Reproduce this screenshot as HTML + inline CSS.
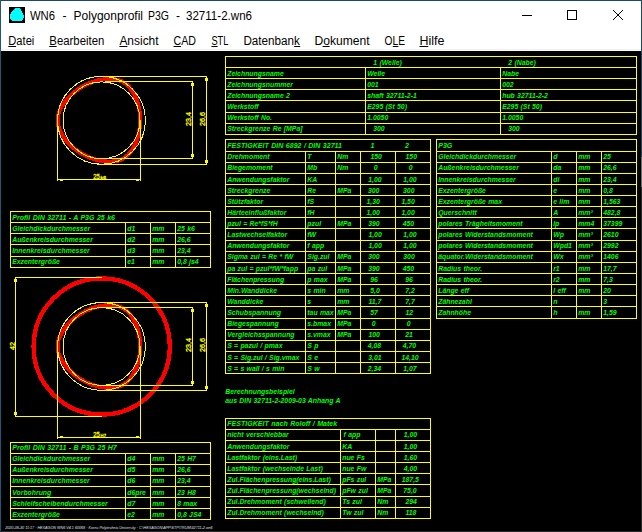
<!DOCTYPE html>
<html lang="de">
<head>
<meta charset="utf-8">
<title>WN6 - Polygonprofil P3G - 32711-2.wn6</title>
<style>
html,body{margin:0;padding:0;background:#000;overflow:hidden}
svg{display:block}
text{white-space:pre}
.t{font-family:"Liberation Sans",sans-serif;font-weight:bold;font-style:italic;word-spacing:0.4px}
.u{font-family:"Liberation Sans",sans-serif}
.d{font-family:"Liberation Sans",sans-serif;stroke:#ffff00;stroke-width:0.3px}
.f{font-family:"Liberation Sans",sans-serif;font-style:italic}
</style>
</head>
<body>
<svg width="642" height="532" viewBox="0 0 642 532">
<rect x="0" y="0" width="642" height="532" fill="#000"/>
<rect x="0" y="0" width="642" height="51" fill="#ffffff"/>
<rect x="1" y="49" width="640" height="1" fill="#f0f0f0"/>
<rect x="0" y="0" width="642" height="1" fill="#1b4a68"/>
<rect x="0" y="0" width="1" height="532" fill="#1e5878"/>
<rect x="641" y="0" width="1" height="532" fill="#1b4a68"/>
<rect x="641" y="157" width="1" height="30" fill="#6e6e6e"/>
<rect x="641" y="187" width="1" height="345" fill="#2b2b2b"/>
<rect x="0" y="531" width="642" height="1" fill="#2a2a2a"/>
<rect x="9" y="7" width="16" height="16" fill="#000"/>
<path shape-rendering="crispEdges" d="M15 8 L20 8 L21.3 10 L22.3 12.5 L23.4 14.5 L24 16.5 L23.4 18.8 L21.5 21 L12 21 L10 18.8 L10 14.4 L11.2 12.5 L13.4 10 Z" fill="#00ffff"/>
<text class="u" x="30.0" y="19.7" font-size="12" fill="#000" textLength="25.0" lengthAdjust="spacingAndGlyphs">WN6</text>
<text class="u" x="62.5" y="19.7" font-size="12" fill="#000" textLength="4.0" lengthAdjust="spacingAndGlyphs">-</text>
<text class="u" x="73.5" y="19.7" font-size="12" fill="#000" textLength="69.5" lengthAdjust="spacingAndGlyphs">Polygonprofil</text>
<text class="u" x="148.0" y="19.7" font-size="12" fill="#000" textLength="21.0" lengthAdjust="spacingAndGlyphs">P3G</text>
<text class="u" x="176.0" y="19.7" font-size="12" fill="#000" textLength="4.0" lengthAdjust="spacingAndGlyphs">-</text>
<text class="u" x="186.0" y="19.7" font-size="12" fill="#000" textLength="66.0" lengthAdjust="spacingAndGlyphs">32711-2.wn6</text>
<rect x="522" y="15" width="10" height="1" fill="#000"/>
<rect x="567.5" y="10.5" width="9" height="9" fill="none" stroke="#000" stroke-width="1"/>
<path d="M613 10 L623 20 M623 10 L613 20" stroke="#000" stroke-width="1" fill="none"/>
<text class="u" x="8.3" y="44.7" font-size="12" fill="#000" textLength="26.0" lengthAdjust="spacingAndGlyphs">Datei</text>
<rect x="8.3" y="46" width="7.7" height="1" fill="#000"/>
<text class="u" x="49.3" y="44.7" font-size="12" fill="#000" textLength="55.0" lengthAdjust="spacingAndGlyphs">Bearbeiten</text>
<rect x="49.3" y="46" width="7.3" height="1" fill="#000"/>
<text class="u" x="119.4" y="44.7" font-size="12" fill="#000" textLength="39.2" lengthAdjust="spacingAndGlyphs">Ansicht</text>
<rect x="119.4" y="46" width="8.0" height="1" fill="#000"/>
<text class="u" x="173.5" y="44.7" font-size="12" fill="#000" textLength="22.5" lengthAdjust="spacingAndGlyphs">CAD</text>
<rect x="173.5" y="46" width="7.5" height="1" fill="#000"/>
<text class="u" x="211.4" y="44.7" font-size="12" fill="#000" textLength="17.0" lengthAdjust="spacingAndGlyphs">STL</text>
<rect x="211.4" y="46" width="6.2" height="1" fill="#000"/>
<text class="u" x="243.4" y="44.7" font-size="12" fill="#000" textLength="56.5" lengthAdjust="spacingAndGlyphs">Datenbank</text>
<rect x="294.2" y="46" width="6.0" height="1" fill="#000"/>
<text class="u" x="314.5" y="44.7" font-size="12" fill="#000" textLength="55.2" lengthAdjust="spacingAndGlyphs">Dokument</text>
<rect x="322.6" y="46" width="7.0" height="1" fill="#000"/>
<text class="u" x="384.6" y="44.7" font-size="12" fill="#000" textLength="20.3" lengthAdjust="spacingAndGlyphs">OLE</text>
<rect x="392.8" y="46" width="5.6" height="1" fill="#000"/>
<text class="u" x="419.5" y="44.7" font-size="12" fill="#000" textLength="24.9" lengthAdjust="spacingAndGlyphs">Hilfe</text>
<rect x="419.5" y="46" width="8.8" height="1" fill="#000"/>
<rect x="225" y="56" width="412" height="1" fill="#ffff00"/>
<rect x="225" y="67" width="412" height="1" fill="#ffff00"/>
<rect x="225" y="78" width="412" height="1" fill="#ffff00"/>
<rect x="225" y="89" width="412" height="1" fill="#ffff00"/>
<rect x="225" y="100" width="412" height="1" fill="#ffff00"/>
<rect x="225" y="112" width="412" height="1" fill="#ffff00"/>
<rect x="225" y="123" width="412" height="1" fill="#ffff00"/>
<rect x="225" y="134" width="412" height="1" fill="#ffff00"/>
<rect x="225" y="56" width="1" height="79" fill="#ffff00"/>
<rect x="636" y="56" width="1" height="79" fill="#ffff00"/>
<rect x="365" y="67" width="1" height="68" fill="#ffff00"/>
<rect x="500" y="67" width="1" height="68" fill="#ffff00"/>
<text class="t" x="373.30" y="64.90" font-size="6.88" fill="#00ff00">1 (Welle)</text>
<text class="t" x="508.30" y="64.90" font-size="6.88" fill="#00ff00">2 (Nabe)</text>
<text class="t" x="227.20" y="76.30" font-size="6.88" fill="#00ff00">Zeichnungsname</text>
<text class="t" x="367.20" y="76.30" font-size="6.88" fill="#00ff00">Welle</text>
<text class="t" x="502.20" y="76.30" font-size="6.88" fill="#00ff00">Nabe</text>
<text class="t" x="227.20" y="87.30" font-size="6.88" fill="#00ff00">Zeichnungsnummer</text>
<text class="t" x="367.20" y="87.30" font-size="6.88" fill="#00ff00">001</text>
<text class="t" x="502.20" y="87.30" font-size="6.88" fill="#00ff00">002</text>
<text class="t" x="227.20" y="98.30" font-size="6.88" fill="#00ff00">Zeichnungsname 2</text>
<text class="t" x="367.20" y="98.30" font-size="6.88" fill="#00ff00">shaft 32711-2-1</text>
<text class="t" x="502.20" y="98.30" font-size="6.88" fill="#00ff00">hub 32711-2-2</text>
<text class="t" x="227.20" y="109.30" font-size="6.88" fill="#00ff00">Werkstoff</text>
<text class="t" x="367.20" y="109.30" font-size="6.88" fill="#00ff00">E295 (St 50)</text>
<text class="t" x="502.20" y="109.30" font-size="6.88" fill="#00ff00">E295 (St 50)</text>
<text class="t" x="227.20" y="120.30" font-size="6.88" fill="#00ff00">Werkstoff No.</text>
<text class="t" x="367.20" y="120.30" font-size="6.88" fill="#00ff00">1.0050</text>
<text class="t" x="502.20" y="120.30" font-size="6.88" fill="#00ff00">1.0050</text>
<text class="t" x="227.20" y="131.30" font-size="6.88" fill="#00ff00">Streckgrenze Re [MPa]</text>
<text class="t" x="373.20" y="131.30" font-size="6.88" fill="#00ff00">300</text>
<text class="t" x="508.20" y="131.30" font-size="6.88" fill="#00ff00">300</text>
<rect x="225" y="139" width="206" height="1" fill="#ffff00"/>
<rect x="225" y="151" width="206" height="1" fill="#ffff00"/>
<rect x="225" y="162" width="206" height="1" fill="#ffff00"/>
<rect x="225" y="173" width="206" height="1" fill="#ffff00"/>
<rect x="225" y="184" width="206" height="1" fill="#ffff00"/>
<rect x="225" y="195" width="206" height="1" fill="#ffff00"/>
<rect x="225" y="206" width="206" height="1" fill="#ffff00"/>
<rect x="225" y="217" width="206" height="1" fill="#ffff00"/>
<rect x="225" y="228" width="206" height="1" fill="#ffff00"/>
<rect x="225" y="240" width="206" height="1" fill="#ffff00"/>
<rect x="225" y="251" width="206" height="1" fill="#ffff00"/>
<rect x="225" y="262" width="206" height="1" fill="#ffff00"/>
<rect x="225" y="273" width="206" height="1" fill="#ffff00"/>
<rect x="225" y="284" width="206" height="1" fill="#ffff00"/>
<rect x="225" y="295" width="206" height="1" fill="#ffff00"/>
<rect x="225" y="306" width="206" height="1" fill="#ffff00"/>
<rect x="225" y="318" width="206" height="1" fill="#ffff00"/>
<rect x="225" y="329" width="206" height="1" fill="#ffff00"/>
<rect x="225" y="340" width="206" height="1" fill="#ffff00"/>
<rect x="225" y="351" width="206" height="1" fill="#ffff00"/>
<rect x="225" y="362" width="206" height="1" fill="#ffff00"/>
<rect x="225" y="373" width="206" height="1" fill="#ffff00"/>
<rect x="225" y="139" width="1" height="235" fill="#ffff00"/>
<rect x="430" y="139" width="1" height="235" fill="#ffff00"/>
<rect x="305" y="151" width="1" height="223" fill="#ffff00"/>
<rect x="335" y="151" width="1" height="223" fill="#ffff00"/>
<rect x="360" y="151" width="1" height="223" fill="#ffff00"/>
<rect x="395" y="151" width="1" height="223" fill="#ffff00"/>
<text class="t" x="227.20" y="148.00" font-size="7.08" fill="#00ff00">FESTIGKEIT DIN 6892 / DIN 32711</text>
<text class="t" x="370.60" y="148.00" font-size="7.08" fill="#00ff00">1</text>
<text class="t" x="405.00" y="148.00" font-size="7.08" fill="#00ff00">2</text>
<text class="t" x="227.20" y="159.20" font-size="6.88" fill="#00ff00">Drehmoment</text>
<text class="t" x="307.30" y="159.20" font-size="6.88" fill="#00ff00">T</text>
<text class="t" x="337.20" y="159.20" font-size="6.88" fill="#00ff00">Nm</text>
<text class="t" x="370.40" y="159.20" font-size="6.88" fill="#00ff00">150</text>
<text class="t" x="405.50" y="159.20" font-size="6.88" fill="#00ff00">150</text>
<text class="t" x="227.20" y="170.20" font-size="6.88" fill="#00ff00">Biegemoment</text>
<text class="t" x="307.30" y="170.20" font-size="6.88" fill="#00ff00">Mb</text>
<text class="t" x="337.20" y="170.20" font-size="6.88" fill="#00ff00">Nm</text>
<text class="t" x="373.80" y="170.20" font-size="6.88" fill="#00ff00">0</text>
<text class="t" x="408.70" y="170.20" font-size="6.88" fill="#00ff00">0</text>
<text class="t" x="227.20" y="182.20" font-size="6.88" fill="#00ff00">Anwendungsfaktor</text>
<text class="t" x="307.30" y="182.20" font-size="6.88" fill="#00ff00">KA</text>
<text class="t" x="368.20" y="182.20" font-size="6.88" fill="#00ff00">1,00</text>
<text class="t" x="403.30" y="182.20" font-size="6.88" fill="#00ff00">1,00</text>
<text class="t" x="227.20" y="193.20" font-size="6.88" fill="#00ff00">Streckgrenze</text>
<text class="t" x="307.30" y="193.20" font-size="6.88" fill="#00ff00">Re</text>
<text class="t" x="337.20" y="193.20" font-size="6.88" fill="#00ff00">MPa</text>
<text class="t" x="367.90" y="193.20" font-size="6.88" fill="#00ff00">300</text>
<text class="t" x="403.00" y="193.20" font-size="6.88" fill="#00ff00">300</text>
<text class="t" x="227.20" y="204.20" font-size="6.88" fill="#00ff00">Stützfaktor</text>
<text class="t" x="307.30" y="204.20" font-size="6.88" fill="#00ff00">fS</text>
<text class="t" x="366.50" y="204.20" font-size="6.88" fill="#00ff00">1,30</text>
<text class="t" x="401.40" y="204.20" font-size="6.88" fill="#00ff00">1,50</text>
<text class="t" x="227.20" y="215.20" font-size="6.88" fill="#00ff00">Härteeinflußfaktor</text>
<text class="t" x="307.30" y="215.20" font-size="6.88" fill="#00ff00">fH</text>
<text class="t" x="366.50" y="215.20" font-size="6.88" fill="#00ff00">1,00</text>
<text class="t" x="401.40" y="215.20" font-size="6.88" fill="#00ff00">1,00</text>
<text class="t" x="227.20" y="226.20" font-size="6.88" fill="#00ff00">pzul = Re*fS*fH</text>
<text class="t" x="307.30" y="226.20" font-size="6.88" fill="#00ff00">pzul</text>
<text class="t" x="337.20" y="226.20" font-size="6.88" fill="#00ff00">MPa</text>
<text class="t" x="368.20" y="226.20" font-size="6.88" fill="#00ff00">390</text>
<text class="t" x="402.70" y="226.20" font-size="6.88" fill="#00ff00">450</text>
<text class="t" x="227.20" y="237.20" font-size="6.88" fill="#00ff00">Lastwechselfaktor</text>
<text class="t" x="307.30" y="237.20" font-size="6.88" fill="#00ff00">fW</text>
<text class="t" x="368.40" y="237.20" font-size="6.88" fill="#00ff00">1,00</text>
<text class="t" x="403.30" y="237.20" font-size="6.88" fill="#00ff00">1,00</text>
<text class="t" x="227.20" y="248.20" font-size="6.88" fill="#00ff00">Anwendungsfaktor</text>
<text class="t" x="307.30" y="248.20" font-size="6.88" fill="#00ff00">f app</text>
<text class="t" x="368.40" y="248.20" font-size="6.88" fill="#00ff00">1,00</text>
<text class="t" x="403.30" y="248.20" font-size="6.88" fill="#00ff00">1,00</text>
<text class="t" x="227.20" y="259.30" font-size="6.88" fill="#00ff00">Sigma zul = Re * fW</text>
<text class="t" x="307.30" y="259.30" font-size="6.88" fill="#00ff00">Sig.zul</text>
<text class="t" x="337.20" y="259.30" font-size="6.88" fill="#00ff00">MPa</text>
<text class="t" x="368.20" y="259.30" font-size="6.88" fill="#00ff00">300</text>
<text class="t" x="403.30" y="259.30" font-size="6.88" fill="#00ff00">300</text>
<text class="t" x="227.20" y="271.20" font-size="6.88" fill="#00ff00">pa zul = pzul*fW*fapp</text>
<text class="t" x="307.30" y="271.20" font-size="6.88" fill="#00ff00">pa zul</text>
<text class="t" x="337.20" y="271.20" font-size="6.88" fill="#00ff00">MPa</text>
<text class="t" x="368.20" y="271.20" font-size="6.88" fill="#00ff00">390</text>
<text class="t" x="402.70" y="271.20" font-size="6.88" fill="#00ff00">450</text>
<text class="t" x="227.20" y="282.20" font-size="6.88" fill="#00ff00">Flächenpressung</text>
<text class="t" x="307.30" y="282.20" font-size="6.88" fill="#00ff00">p max</text>
<text class="t" x="337.20" y="282.20" font-size="6.88" fill="#00ff00">MPa</text>
<text class="t" x="370.30" y="282.20" font-size="6.88" fill="#00ff00">96</text>
<text class="t" x="405.20" y="282.20" font-size="6.88" fill="#00ff00">96</text>
<text class="t" x="227.20" y="293.20" font-size="6.88" fill="#00ff00">Min.Wanddicke</text>
<text class="t" x="307.30" y="293.20" font-size="6.88" fill="#00ff00">s min</text>
<text class="t" x="337.20" y="293.20" font-size="6.88" fill="#00ff00">mm</text>
<text class="t" x="370.30" y="293.20" font-size="6.88" fill="#00ff00">5,0</text>
<text class="t" x="405.20" y="293.20" font-size="6.88" fill="#00ff00">7,2</text>
<text class="t" x="227.20" y="304.20" font-size="6.88" fill="#00ff00">Wanddicke</text>
<text class="t" x="307.30" y="304.20" font-size="6.88" fill="#00ff00">s</text>
<text class="t" x="337.20" y="304.20" font-size="6.88" fill="#00ff00">mm</text>
<text class="t" x="368.40" y="304.20" font-size="6.88" fill="#00ff00">11,7</text>
<text class="t" x="405.20" y="304.20" font-size="6.88" fill="#00ff00">7,7</text>
<text class="t" x="227.20" y="315.20" font-size="6.88" fill="#00ff00">Schubspannung</text>
<text class="t" x="307.30" y="315.20" font-size="6.88" fill="#00ff00">tau max</text>
<text class="t" x="337.20" y="315.20" font-size="6.88" fill="#00ff00">MPa</text>
<text class="t" x="370.30" y="315.20" font-size="6.88" fill="#00ff00">57</text>
<text class="t" x="405.50" y="315.20" font-size="6.88" fill="#00ff00">12</text>
<text class="t" x="227.20" y="326.20" font-size="6.88" fill="#00ff00">Biegespannung</text>
<text class="t" x="307.30" y="326.20" font-size="6.88" fill="#00ff00">s.bmax</text>
<text class="t" x="337.20" y="326.20" font-size="6.88" fill="#00ff00">MPa</text>
<text class="t" x="371.70" y="326.20" font-size="6.88" fill="#00ff00">0</text>
<text class="t" x="406.70" y="326.20" font-size="6.88" fill="#00ff00">0</text>
<text class="t" x="227.20" y="337.20" font-size="6.88" fill="#00ff00">Vergleichsspannung</text>
<text class="t" x="307.30" y="337.20" font-size="6.88" fill="#00ff00">s.vmax</text>
<text class="t" x="337.20" y="337.20" font-size="6.88" fill="#00ff00">MPa</text>
<text class="t" x="368.40" y="337.20" font-size="6.88" fill="#00ff00">100</text>
<text class="t" x="405.20" y="337.20" font-size="6.88" fill="#00ff00">21</text>
<text class="t" x="227.20" y="348.30" font-size="6.88" fill="#00ff00">S = pazul / pmax</text>
<text class="t" x="307.30" y="348.30" font-size="6.88" fill="#00ff00">S p</text>
<text class="t" x="367.70" y="348.30" font-size="6.88" fill="#00ff00">4,08</text>
<text class="t" x="402.70" y="348.30" font-size="6.88" fill="#00ff00">4,70</text>
<text class="t" x="227.20" y="360.20" font-size="6.88" fill="#00ff00">S = Sig.zul / Sig.vmax</text>
<text class="t" x="307.30" y="360.20" font-size="6.88" fill="#00ff00">S e</text>
<text class="t" x="368.20" y="360.20" font-size="6.88" fill="#00ff00">3,01</text>
<text class="t" x="401.40" y="360.20" font-size="6.88" fill="#00ff00">14,10</text>
<text class="t" x="227.20" y="371.20" font-size="6.88" fill="#00ff00">S = s wall / s min</text>
<text class="t" x="307.30" y="371.20" font-size="6.88" fill="#00ff00">S w</text>
<text class="t" x="367.70" y="371.20" font-size="6.88" fill="#00ff00">2,34</text>
<text class="t" x="403.30" y="371.20" font-size="6.88" fill="#00ff00">1,07</text>
<rect x="436" y="139" width="201" height="1" fill="#ffff00"/>
<rect x="436" y="151" width="201" height="1" fill="#ffff00"/>
<rect x="436" y="162" width="201" height="1" fill="#ffff00"/>
<rect x="436" y="173" width="201" height="1" fill="#ffff00"/>
<rect x="436" y="184" width="201" height="1" fill="#ffff00"/>
<rect x="436" y="195" width="201" height="1" fill="#ffff00"/>
<rect x="436" y="206" width="201" height="1" fill="#ffff00"/>
<rect x="436" y="217" width="201" height="1" fill="#ffff00"/>
<rect x="436" y="228" width="201" height="1" fill="#ffff00"/>
<rect x="436" y="240" width="201" height="1" fill="#ffff00"/>
<rect x="436" y="251" width="201" height="1" fill="#ffff00"/>
<rect x="436" y="262" width="201" height="1" fill="#ffff00"/>
<rect x="436" y="273" width="201" height="1" fill="#ffff00"/>
<rect x="436" y="284" width="201" height="1" fill="#ffff00"/>
<rect x="436" y="295" width="201" height="1" fill="#ffff00"/>
<rect x="436" y="306" width="201" height="1" fill="#ffff00"/>
<rect x="436" y="318" width="201" height="1" fill="#ffff00"/>
<rect x="436" y="139" width="1" height="180" fill="#ffff00"/>
<rect x="636" y="139" width="1" height="180" fill="#ffff00"/>
<rect x="551" y="151" width="1" height="168" fill="#ffff00"/>
<rect x="576" y="151" width="1" height="168" fill="#ffff00"/>
<rect x="601" y="151" width="1" height="168" fill="#ffff00"/>
<text class="t" x="438.20" y="148.00" font-size="7.08" fill="#00ff00">P3G</text>
<text class="t" x="438.20" y="159.20" font-size="6.88" fill="#00ff00">Gleichdickdurchmesser</text>
<text class="t" x="553.20" y="159.20" font-size="6.88" fill="#00ff00">d</text>
<text class="t" x="578.20" y="159.20" font-size="6.88" fill="#00ff00">mm</text>
<text class="t" x="603.20" y="159.20" font-size="6.88" fill="#00ff00">25</text>
<text class="t" x="438.20" y="170.20" font-size="6.88" fill="#00ff00">Außenkreisdurchmesser</text>
<text class="t" x="553.20" y="170.20" font-size="6.88" fill="#00ff00">da</text>
<text class="t" x="578.20" y="170.20" font-size="6.88" fill="#00ff00">mm</text>
<text class="t" x="603.20" y="170.20" font-size="6.88" fill="#00ff00">26,6</text>
<text class="t" x="438.20" y="182.20" font-size="6.88" fill="#00ff00">Innenkreisdurchmesser</text>
<text class="t" x="553.20" y="182.20" font-size="6.88" fill="#00ff00">di</text>
<text class="t" x="578.20" y="182.20" font-size="6.88" fill="#00ff00">mm</text>
<text class="t" x="603.20" y="182.20" font-size="6.88" fill="#00ff00">23,4</text>
<text class="t" x="438.20" y="193.20" font-size="6.88" fill="#00ff00">Exzentergröße</text>
<text class="t" x="553.20" y="193.20" font-size="6.88" fill="#00ff00">e</text>
<text class="t" x="578.20" y="193.20" font-size="6.88" fill="#00ff00">mm</text>
<text class="t" x="603.20" y="193.20" font-size="6.88" fill="#00ff00">0,8</text>
<text class="t" x="438.20" y="204.20" font-size="6.88" fill="#00ff00">Exzentergröße max</text>
<text class="t" x="553.20" y="204.20" font-size="6.88" fill="#00ff00">e lim</text>
<text class="t" x="578.20" y="204.20" font-size="6.88" fill="#00ff00">mm</text>
<text class="t" x="603.20" y="204.20" font-size="6.88" fill="#00ff00">1,563</text>
<text class="t" x="438.20" y="215.20" font-size="6.88" fill="#00ff00">Querschnitt</text>
<text class="t" x="553.20" y="215.20" font-size="6.88" fill="#00ff00">A</text>
<text class="t" x="578.20" y="215.20" font-size="6.88" fill="#00ff00">mm²</text>
<text class="t" x="603.20" y="215.20" font-size="6.88" fill="#00ff00">482,8</text>
<text class="t" x="438.20" y="226.20" font-size="6.88" fill="#00ff00">polares Trägheitsmoment</text>
<text class="t" x="553.20" y="226.20" font-size="6.88" fill="#00ff00">Ip</text>
<text class="t" x="578.20" y="226.20" font-size="6.88" fill="#00ff00">mm4</text>
<text class="t" x="603.20" y="226.20" font-size="6.88" fill="#00ff00">37399</text>
<text class="t" x="438.20" y="237.20" font-size="6.88" fill="#00ff00">polares Widerstandsmoment</text>
<text class="t" x="553.20" y="237.20" font-size="6.88" fill="#00ff00">Wp</text>
<text class="t" x="578.20" y="237.20" font-size="6.88" fill="#00ff00">mm³</text>
<text class="t" x="603.20" y="237.20" font-size="6.88" fill="#00ff00">2610</text>
<text class="t" x="438.20" y="248.20" font-size="6.88" fill="#00ff00">polares Widerstandsmoment</text>
<text class="t" x="553.20" y="248.20" font-size="6.88" fill="#00ff00">Wpd1</text>
<text class="t" x="578.20" y="248.20" font-size="6.88" fill="#00ff00">mm³</text>
<text class="t" x="603.20" y="248.20" font-size="6.88" fill="#00ff00">2992</text>
<text class="t" x="438.20" y="259.30" font-size="6.88" fill="#00ff00">äquator.Widerstandsmoment</text>
<text class="t" x="553.20" y="259.30" font-size="6.88" fill="#00ff00">Wx</text>
<text class="t" x="578.20" y="259.30" font-size="6.88" fill="#00ff00">mm³</text>
<text class="t" x="603.20" y="259.30" font-size="6.88" fill="#00ff00">1406</text>
<text class="t" x="438.20" y="271.20" font-size="6.88" fill="#00ff00">Radius theor.</text>
<text class="t" x="553.20" y="271.20" font-size="6.88" fill="#00ff00">r1</text>
<text class="t" x="578.20" y="271.20" font-size="6.88" fill="#00ff00">mm</text>
<text class="t" x="603.20" y="271.20" font-size="6.88" fill="#00ff00">17,7</text>
<text class="t" x="438.20" y="282.20" font-size="6.88" fill="#00ff00">Radius theor.</text>
<text class="t" x="553.20" y="282.20" font-size="6.88" fill="#00ff00">r2</text>
<text class="t" x="578.20" y="282.20" font-size="6.88" fill="#00ff00">mm</text>
<text class="t" x="603.20" y="282.20" font-size="6.88" fill="#00ff00">7,3</text>
<text class="t" x="438.20" y="293.20" font-size="6.88" fill="#00ff00">Länge eff</text>
<text class="t" x="553.20" y="293.20" font-size="6.88" fill="#00ff00">l eff</text>
<text class="t" x="578.20" y="293.20" font-size="6.88" fill="#00ff00">mm</text>
<text class="t" x="603.20" y="293.20" font-size="6.88" fill="#00ff00">20</text>
<text class="t" x="438.20" y="304.20" font-size="6.88" fill="#00ff00">Zähnezahl</text>
<text class="t" x="553.20" y="304.20" font-size="6.88" fill="#00ff00">n</text>
<text class="t" x="603.20" y="304.20" font-size="6.88" fill="#00ff00">3</text>
<text class="t" x="438.20" y="315.20" font-size="6.88" fill="#00ff00">Zahnhöhe</text>
<text class="t" x="553.20" y="315.20" font-size="6.88" fill="#00ff00">h</text>
<text class="t" x="578.20" y="315.20" font-size="6.88" fill="#00ff00">mm</text>
<text class="t" x="603.20" y="315.20" font-size="6.88" fill="#00ff00">1,59</text>
<rect x="10" y="211" width="201" height="1" fill="#ffff00"/>
<rect x="10" y="222" width="201" height="1" fill="#ffff00"/>
<rect x="10" y="233" width="201" height="1" fill="#ffff00"/>
<rect x="10" y="244" width="201" height="1" fill="#ffff00"/>
<rect x="10" y="256" width="201" height="1" fill="#ffff00"/>
<rect x="10" y="267" width="201" height="1" fill="#ffff00"/>
<rect x="10" y="211" width="1" height="57" fill="#ffff00"/>
<rect x="210" y="211" width="1" height="57" fill="#ffff00"/>
<rect x="125" y="222" width="1" height="46" fill="#ffff00"/>
<rect x="150" y="222" width="1" height="46" fill="#ffff00"/>
<rect x="175" y="222" width="1" height="46" fill="#ffff00"/>
<text class="t" x="12.20" y="219.80" font-size="7.08" fill="#00ff00">Profil DIN 32711 - A P3G 25 k6</text>
<text class="t" x="12.20" y="230.80" font-size="6.88" fill="#00ff00">Gleichdickdurchmesser</text>
<text class="t" x="127.20" y="230.80" font-size="6.88" fill="#00ff00">d1</text>
<text class="t" x="152.20" y="230.80" font-size="6.88" fill="#00ff00">mm</text>
<text class="t" x="177.20" y="230.80" font-size="6.88" fill="#00ff00">25 k6</text>
<text class="t" x="12.20" y="241.93" font-size="6.88" fill="#00ff00">Außenkreisdurchmesser</text>
<text class="t" x="127.20" y="241.93" font-size="6.88" fill="#00ff00">d2</text>
<text class="t" x="152.20" y="241.93" font-size="6.88" fill="#00ff00">mm</text>
<text class="t" x="177.20" y="241.93" font-size="6.88" fill="#00ff00">26,6</text>
<text class="t" x="12.20" y="253.06" font-size="6.88" fill="#00ff00">Innenkreisdurchmesser</text>
<text class="t" x="127.20" y="253.06" font-size="6.88" fill="#00ff00">d3</text>
<text class="t" x="152.20" y="253.06" font-size="6.88" fill="#00ff00">mm</text>
<text class="t" x="177.20" y="253.06" font-size="6.88" fill="#00ff00">23,4</text>
<text class="t" x="12.20" y="264.19" font-size="6.88" fill="#00ff00">Exzentergröße</text>
<text class="t" x="127.20" y="264.19" font-size="6.88" fill="#00ff00">e1</text>
<text class="t" x="152.20" y="264.19" font-size="6.88" fill="#00ff00">mm</text>
<text class="t" x="177.20" y="264.19" font-size="6.88" fill="#00ff00">0,8 js4</text>
<rect x="10" y="442" width="201" height="1" fill="#ffff00"/>
<rect x="10" y="453" width="201" height="1" fill="#ffff00"/>
<rect x="10" y="464" width="201" height="1" fill="#ffff00"/>
<rect x="10" y="475" width="201" height="1" fill="#ffff00"/>
<rect x="10" y="486" width="201" height="1" fill="#ffff00"/>
<rect x="10" y="497" width="201" height="1" fill="#ffff00"/>
<rect x="10" y="508" width="201" height="1" fill="#ffff00"/>
<rect x="10" y="519" width="201" height="1" fill="#ffff00"/>
<rect x="10" y="442" width="1" height="78" fill="#ffff00"/>
<rect x="210" y="442" width="1" height="78" fill="#ffff00"/>
<rect x="125" y="453" width="1" height="67" fill="#ffff00"/>
<rect x="150" y="453" width="1" height="67" fill="#ffff00"/>
<rect x="175" y="453" width="1" height="67" fill="#ffff00"/>
<text class="t" x="12.20" y="450.20" font-size="7.08" fill="#00ff00">Profil DIN 32711 - B P3G 25 H7</text>
<text class="t" x="12.20" y="460.90" font-size="6.88" fill="#00ff00">Gleichdickdurchmesser</text>
<text class="t" x="127.20" y="460.90" font-size="6.88" fill="#00ff00">d4</text>
<text class="t" x="152.20" y="460.90" font-size="6.88" fill="#00ff00">mm</text>
<text class="t" x="177.20" y="460.90" font-size="6.88" fill="#00ff00">25 H7</text>
<text class="t" x="12.20" y="472.15" font-size="6.88" fill="#00ff00">Außenkreisdurchmesser</text>
<text class="t" x="127.20" y="472.15" font-size="6.88" fill="#00ff00">d5</text>
<text class="t" x="152.20" y="472.15" font-size="6.88" fill="#00ff00">mm</text>
<text class="t" x="177.20" y="472.15" font-size="6.88" fill="#00ff00">26,6</text>
<text class="t" x="12.20" y="483.40" font-size="6.88" fill="#00ff00">Innenkreisdurchmesser</text>
<text class="t" x="127.20" y="483.40" font-size="6.88" fill="#00ff00">d6</text>
<text class="t" x="152.20" y="483.40" font-size="6.88" fill="#00ff00">mm</text>
<text class="t" x="177.20" y="483.40" font-size="6.88" fill="#00ff00">23,4</text>
<text class="t" x="12.20" y="494.65" font-size="6.88" fill="#00ff00">Vorbohrung</text>
<text class="t" x="127.20" y="494.65" font-size="6.88" fill="#00ff00">d6pre</text>
<text class="t" x="152.20" y="494.65" font-size="6.88" fill="#00ff00">mm</text>
<text class="t" x="177.20" y="494.65" font-size="6.88" fill="#00ff00">23 H8</text>
<text class="t" x="12.20" y="505.90" font-size="6.88" fill="#00ff00">Schleifscheibendurchmesser</text>
<text class="t" x="127.20" y="505.90" font-size="6.88" fill="#00ff00">d7</text>
<text class="t" x="152.20" y="505.90" font-size="6.88" fill="#00ff00">mm</text>
<text class="t" x="177.20" y="505.90" font-size="6.88" fill="#00ff00">8 max</text>
<text class="t" x="12.20" y="517.15" font-size="6.88" fill="#00ff00">Exzentergröße</text>
<text class="t" x="127.20" y="517.15" font-size="6.88" fill="#00ff00">e2</text>
<text class="t" x="152.20" y="517.15" font-size="6.88" fill="#00ff00">mm</text>
<text class="t" x="177.20" y="517.15" font-size="6.88" fill="#00ff00">0,8 JS4</text>
<text class="t" x="225.20" y="394.00" font-size="6.88" fill="#00ff00">Berechnungsbeispiel</text>
<text class="t" x="225.20" y="402.60" font-size="6.88" fill="#00ff00">aus DIN 32711-2-2009-03 Anhang A</text>
<rect x="225" y="418" width="206" height="1" fill="#ffff00"/>
<rect x="225" y="429" width="206" height="1" fill="#ffff00"/>
<rect x="225" y="440" width="206" height="1" fill="#ffff00"/>
<rect x="225" y="451" width="206" height="1" fill="#ffff00"/>
<rect x="225" y="462" width="206" height="1" fill="#ffff00"/>
<rect x="225" y="473" width="206" height="1" fill="#ffff00"/>
<rect x="225" y="484" width="206" height="1" fill="#ffff00"/>
<rect x="225" y="496" width="206" height="1" fill="#ffff00"/>
<rect x="225" y="507" width="206" height="1" fill="#ffff00"/>
<rect x="225" y="518" width="206" height="1" fill="#ffff00"/>
<rect x="225" y="418" width="1" height="101" fill="#ffff00"/>
<rect x="430" y="418" width="1" height="101" fill="#ffff00"/>
<rect x="340" y="429" width="1" height="90" fill="#ffff00"/>
<rect x="375" y="429" width="1" height="90" fill="#ffff00"/>
<rect x="395" y="429" width="1" height="90" fill="#ffff00"/>
<text class="t" x="227.20" y="425.80" font-size="7.08" fill="#00ff00">FESTIGKEIT nach Roloff / Matek</text>
<text class="t" x="227.20" y="437.30" font-size="6.88" fill="#00ff00">nicht verschiebbar</text>
<text class="t" x="343.60" y="437.30" font-size="6.88" fill="#00ff00">f app</text>
<text class="t" x="403.70" y="437.30" font-size="6.88" fill="#00ff00">1,00</text>
<text class="t" x="227.20" y="448.80" font-size="6.88" fill="#00ff00">Anwendungsfaktor</text>
<text class="t" x="342.20" y="448.80" font-size="6.88" fill="#00ff00">KA</text>
<text class="t" x="403.70" y="448.80" font-size="6.88" fill="#00ff00">1,00</text>
<text class="t" x="227.20" y="460.20" font-size="6.88" fill="#00ff00">Lastfaktor (eins.Last)</text>
<text class="t" x="342.20" y="460.20" font-size="6.88" fill="#00ff00">nue Fs</text>
<text class="t" x="403.70" y="460.20" font-size="6.88" fill="#00ff00">1,60</text>
<text class="t" x="227.20" y="471.20" font-size="6.88" fill="#00ff00">Lastfaktor (wechselnde Last)</text>
<text class="t" x="342.20" y="471.20" font-size="6.88" fill="#00ff00">nue Fw</text>
<text class="t" x="403.70" y="471.20" font-size="6.88" fill="#00ff00">4,00</text>
<text class="t" x="227.20" y="482.20" font-size="6.88" fill="#00ff00">Zul.Flächenpressung(eins.Last)</text>
<text class="t" x="342.20" y="482.20" font-size="6.88" fill="#00ff00">pFs zul</text>
<text class="t" x="377.20" y="482.20" font-size="6.88" fill="#00ff00">MPa</text>
<text class="t" x="401.70" y="482.20" font-size="6.88" fill="#00ff00">187,5</text>
<text class="t" x="227.20" y="493.20" font-size="6.88" fill="#00ff00">Zul.Flächenpressung(wechselnd)</text>
<text class="t" x="342.20" y="493.20" font-size="6.88" fill="#00ff00">pFw zul</text>
<text class="t" x="377.20" y="493.20" font-size="6.88" fill="#00ff00">MPa</text>
<text class="t" x="403.30" y="493.20" font-size="6.88" fill="#00ff00">75,0</text>
<text class="t" x="227.20" y="504.20" font-size="6.88" fill="#00ff00">Zul.Drehmoment (schwellend)</text>
<text class="t" x="342.20" y="504.20" font-size="6.88" fill="#00ff00">Ts zul</text>
<text class="t" x="377.20" y="504.20" font-size="6.88" fill="#00ff00">Nm</text>
<text class="t" x="405.40" y="504.20" font-size="6.88" fill="#00ff00">294</text>
<text class="t" x="227.20" y="515.30" font-size="6.88" fill="#00ff00">Zul.Drehmoment (wechselnd)</text>
<text class="t" x="342.20" y="515.30" font-size="6.88" fill="#00ff00">Tw zul</text>
<text class="t" x="377.20" y="515.30" font-size="6.88" fill="#00ff00">Nm</text>
<text class="t" x="405.40" y="515.30" font-size="6.88" fill="#00ff00">118</text>
<text class="f" x="5.2" y="528.9" font-size="4" fill="#dde0ee" textLength="207.5" lengthAdjust="spacingAndGlyphs">2020-08-30 11:17 · HEXAGON WN6 V4.1 60068 · Korea Polytechnic University · C:\HEXAGON\APP\STP\TRUM\32711-2.wn6</text>
<path d="M140.17 120.30 L140.13 122.48 L140.02 124.65 L139.83 126.79 L139.57 128.91 L139.24 130.98 L138.85 133.01 L138.39 134.97 L137.89 136.87 L137.33 138.69 L136.73 140.43 L136.09 142.09 L135.43 143.66 L134.74 145.14 L134.03 146.53 L133.31 147.83 L132.59 149.03 L131.87 150.14 L131.15 151.17 L130.44 152.11 L129.74 152.97 L129.06 153.75 L128.40 154.47 L127.75 155.12 L127.11 155.71 L126.49 156.25 L125.88 156.74 L125.28 157.20 L124.68 157.62 L124.08 158.00 L123.48 158.37 L122.86 158.71 L122.23 159.03 L121.57 159.34 L120.87 159.64 L120.14 159.92 L119.36 160.18 L118.53 160.44 L117.64 160.68 L116.69 160.90 L115.67 161.09 L114.57 161.27 L113.41 161.41 L112.16 161.52 L110.84 161.59 L109.43 161.61 L107.95 161.59 L106.40 161.50 L104.77 161.36 L103.08 161.15 L101.32 160.88 L99.51 160.52 L97.65 160.09 L95.76 159.59 L93.83 159.00 L91.88 158.33 L89.92 157.57 L87.96 156.74 L86.01 155.83 L84.07 154.84 L82.17 153.79 L80.30 152.67 L78.48 151.48 L76.71 150.25 L75.01 148.97 L73.38 147.64 L71.82 146.29 L70.35 144.92 L68.96 143.53 L67.66 142.13 L66.45 140.74 L65.33 139.36 L64.30 138.00 L63.37 136.66 L62.52 135.36 L61.76 134.09 L61.08 132.86 L60.47 131.68 L59.94 130.54 L59.48 129.46 L59.09 128.43 L58.75 127.44 L58.46 126.51 L58.22 125.62 L58.03 124.77 L57.87 123.97 L57.75 123.19 L57.66 122.44 L57.59 121.72 L57.56 121.00 L57.54 120.30 L57.56 119.60 L57.59 118.88 L57.66 118.16 L57.75 117.41 L57.87 116.63 L58.03 115.83 L58.22 114.98 L58.46 114.09 L58.75 113.16 L59.09 112.17 L59.48 111.14 L59.94 110.06 L60.47 108.92 L61.08 107.74 L61.76 106.51 L62.52 105.24 L63.37 103.94 L64.30 102.60 L65.33 101.24 L66.45 99.86 L67.66 98.47 L68.96 97.07 L70.35 95.68 L71.82 94.31 L73.38 92.96 L75.01 91.63 L76.71 90.35 L78.48 89.12 L80.30 87.93 L82.17 86.81 L84.07 85.76 L86.01 84.77 L87.96 83.86 L89.92 83.03 L91.88 82.27 L93.83 81.60 L95.76 81.01 L97.65 80.51 L99.51 80.08 L101.32 79.72 L103.08 79.45 L104.77 79.24 L106.40 79.10 L107.95 79.01 L109.43 78.99 L110.84 79.01 L112.16 79.08 L113.41 79.19 L114.57 79.33 L115.67 79.51 L116.69 79.70 L117.64 79.92 L118.53 80.16 L119.36 80.42 L120.14 80.68 L120.87 80.96 L121.57 81.26 L122.23 81.57 L122.86 81.89 L123.48 82.23 L124.08 82.60 L124.68 82.98 L125.28 83.40 L125.88 83.86 L126.49 84.35 L127.11 84.89 L127.75 85.48 L128.40 86.13 L129.06 86.85 L129.74 87.63 L130.44 88.49 L131.15 89.43 L131.87 90.46 L132.59 91.57 L133.31 92.77 L134.03 94.07 L134.74 95.46 L135.43 96.94 L136.09 98.51 L136.73 100.17 L137.33 101.91 L137.89 103.73 L138.39 105.63 L138.85 107.59 L139.24 109.62 L139.57 111.69 L139.83 113.81 L140.02 115.95 L140.13 118.12 Z" fill="none" stroke="#ff0000" stroke-width="4" stroke-linejoin="round" shape-rendering="crispEdges"/>
<circle cx="101.5" cy="120.3" r="43.96" fill="none" stroke="#ffff00" stroke-width="1" shape-rendering="crispEdges"/>
<ellipse cx="101.5" cy="120.3" rx="38.40" ry="38.40" fill="none" stroke="#ffff00" stroke-width="1" shape-rendering="crispEdges"/>
<rect x="97" y="76" width="110" height="1" fill="#ffff00"/>
<rect x="97" y="164" width="110" height="1" fill="#ffff00"/>
<rect x="105" y="81" width="88" height="1" fill="#ffff00"/>
<rect x="105" y="158" width="88" height="1" fill="#ffff00"/>
<rect x="192" y="81" width="1" height="78" fill="#ffff00"/>
<rect x="206" y="76" width="1" height="89" fill="#ffff00"/>
<rect x="191" y="83" width="3" height="3" fill="#ffff00"/>
<rect x="191" y="154" width="3" height="3" fill="#ffff00"/>
<rect x="205" y="78" width="3" height="3" fill="#ffff00"/>
<rect x="205" y="160" width="3" height="3" fill="#ffff00"/>
<text class="d" transform="translate(191.1 118.9) rotate(-90)" font-size="7.2" fill="#ffff00" text-anchor="middle">23,4</text>
<text class="d" transform="translate(204.9 118.9) rotate(-90)" font-size="7.2" fill="#ffff00" text-anchor="middle">26,6</text>
<rect x="57" y="120" width="1" height="61" fill="#ffff00"/>
<rect x="140" y="120" width="1" height="61" fill="#ffff00"/>
<rect x="57" y="179" width="84" height="1" fill="#ffff00"/>
<rect x="60" y="180" width="3" height="1" fill="#ffff00"/>
<rect x="136" y="180" width="3" height="1" fill="#ffff00"/>
<text class="d" x="93.3" y="178.8" font-size="6.8" fill="#ffff00" textLength="6.6" lengthAdjust="spacingAndGlyphs">25</text>
<text class="d" x="100.6" y="178.8" font-size="4.4" fill="#ffff00" textLength="5.4" lengthAdjust="spacingAndGlyphs">k6</text>
<circle cx="101.7" cy="346.5" r="68.1" fill="none" stroke="#ff0000" stroke-width="4.3" shape-rendering="crispEdges"/>
<path d="M140.17 346.50 L140.13 348.68 L140.02 350.85 L139.83 352.99 L139.57 355.11 L139.24 357.18 L138.85 359.21 L138.39 361.17 L137.89 363.07 L137.33 364.89 L136.73 366.63 L136.09 368.29 L135.43 369.86 L134.74 371.34 L134.03 372.73 L133.31 374.03 L132.59 375.23 L131.87 376.34 L131.15 377.37 L130.44 378.31 L129.74 379.17 L129.06 379.95 L128.40 380.67 L127.75 381.32 L127.11 381.91 L126.49 382.45 L125.88 382.94 L125.28 383.40 L124.68 383.82 L124.08 384.20 L123.48 384.57 L122.86 384.91 L122.23 385.23 L121.57 385.54 L120.87 385.84 L120.14 386.12 L119.36 386.38 L118.53 386.64 L117.64 386.88 L116.69 387.10 L115.67 387.29 L114.57 387.47 L113.41 387.61 L112.16 387.72 L110.84 387.79 L109.43 387.81 L107.95 387.79 L106.40 387.70 L104.77 387.56 L103.08 387.35 L101.32 387.08 L99.51 386.72 L97.65 386.29 L95.76 385.79 L93.83 385.20 L91.88 384.53 L89.92 383.77 L87.96 382.94 L86.01 382.03 L84.07 381.04 L82.17 379.99 L80.30 378.87 L78.48 377.68 L76.71 376.45 L75.01 375.17 L73.38 373.84 L71.82 372.49 L70.35 371.12 L68.96 369.73 L67.66 368.33 L66.45 366.94 L65.33 365.56 L64.30 364.20 L63.37 362.86 L62.52 361.56 L61.76 360.29 L61.08 359.06 L60.47 357.88 L59.94 356.74 L59.48 355.66 L59.09 354.63 L58.75 353.64 L58.46 352.71 L58.22 351.82 L58.03 350.97 L57.87 350.17 L57.75 349.39 L57.66 348.64 L57.59 347.92 L57.56 347.20 L57.54 346.50 L57.56 345.80 L57.59 345.08 L57.66 344.36 L57.75 343.61 L57.87 342.83 L58.03 342.03 L58.22 341.18 L58.46 340.29 L58.75 339.36 L59.09 338.37 L59.48 337.34 L59.94 336.26 L60.47 335.12 L61.08 333.94 L61.76 332.71 L62.52 331.44 L63.37 330.14 L64.30 328.80 L65.33 327.44 L66.45 326.06 L67.66 324.67 L68.96 323.27 L70.35 321.88 L71.82 320.51 L73.38 319.16 L75.01 317.83 L76.71 316.55 L78.48 315.32 L80.30 314.13 L82.17 313.01 L84.07 311.96 L86.01 310.97 L87.96 310.06 L89.92 309.23 L91.88 308.47 L93.83 307.80 L95.76 307.21 L97.65 306.71 L99.51 306.28 L101.32 305.92 L103.08 305.65 L104.77 305.44 L106.40 305.30 L107.95 305.21 L109.43 305.19 L110.84 305.21 L112.16 305.28 L113.41 305.39 L114.57 305.53 L115.67 305.71 L116.69 305.90 L117.64 306.12 L118.53 306.36 L119.36 306.62 L120.14 306.88 L120.87 307.16 L121.57 307.46 L122.23 307.77 L122.86 308.09 L123.48 308.43 L124.08 308.80 L124.68 309.18 L125.28 309.60 L125.88 310.06 L126.49 310.55 L127.11 311.09 L127.75 311.68 L128.40 312.33 L129.06 313.05 L129.74 313.83 L130.44 314.69 L131.15 315.63 L131.87 316.66 L132.59 317.77 L133.31 318.97 L134.03 320.27 L134.74 321.66 L135.43 323.14 L136.09 324.71 L136.73 326.37 L137.33 328.11 L137.89 329.93 L138.39 331.83 L138.85 333.79 L139.24 335.82 L139.57 337.89 L139.83 340.01 L140.02 342.15 L140.13 344.32 Z" fill="none" stroke="#ff0000" stroke-width="4" stroke-linejoin="round" shape-rendering="crispEdges"/>
<circle cx="101.5" cy="346.5" r="43.96" fill="none" stroke="#ffff00" stroke-width="1" shape-rendering="crispEdges"/>
<ellipse cx="101.5" cy="346.5" rx="38.40" ry="38.90" fill="none" stroke="#ffff00" stroke-width="1" shape-rendering="crispEdges"/>
<rect x="97" y="302" width="110" height="1" fill="#ffff00"/>
<rect x="97" y="390" width="110" height="1" fill="#ffff00"/>
<rect x="105" y="307" width="88" height="1" fill="#ffff00"/>
<rect x="105" y="385" width="88" height="1" fill="#ffff00"/>
<rect x="192" y="307" width="1" height="79" fill="#ffff00"/>
<rect x="206" y="302" width="1" height="89" fill="#ffff00"/>
<rect x="191" y="309" width="3" height="3" fill="#ffff00"/>
<rect x="191" y="381" width="3" height="3" fill="#ffff00"/>
<rect x="205" y="304" width="3" height="3" fill="#ffff00"/>
<rect x="205" y="386" width="3" height="3" fill="#ffff00"/>
<text class="d" transform="translate(191.1 345.1) rotate(-90)" font-size="7.2" fill="#ffff00" text-anchor="middle">23,4</text>
<text class="d" transform="translate(204.9 345.1) rotate(-90)" font-size="7.2" fill="#ffff00" text-anchor="middle">26,6</text>
<rect x="57" y="346" width="1" height="93" fill="#ffff00"/>
<rect x="140" y="346" width="1" height="93" fill="#ffff00"/>
<rect x="57" y="437" width="84" height="1" fill="#ffff00"/>
<rect x="60" y="436" width="3" height="1" fill="#ffff00"/>
<rect x="136" y="436" width="3" height="1" fill="#ffff00"/>
<text class="d" x="93.3" y="436.8" font-size="6.8" fill="#ffff00" textLength="6.6" lengthAdjust="spacingAndGlyphs">25</text>
<text class="d" x="100.6" y="436.8" font-size="4.4" fill="#ffff00" textLength="5.4" lengthAdjust="spacingAndGlyphs">H7</text>
<rect x="15" y="277" width="87" height="1" fill="#ffff00"/>
<rect x="15" y="416" width="87" height="1" fill="#ffff00"/>
<rect x="15" y="277" width="1" height="140" fill="#ffff00"/>
<rect x="14" y="279" width="3" height="3" fill="#ffff00"/>
<rect x="14" y="412" width="3" height="3" fill="#ffff00"/>
<text class="d" transform="translate(14.5 346.1) rotate(-90)" font-size="7.2" fill="#ffff00" text-anchor="middle">42</text>
</svg>
</body>
</html>
